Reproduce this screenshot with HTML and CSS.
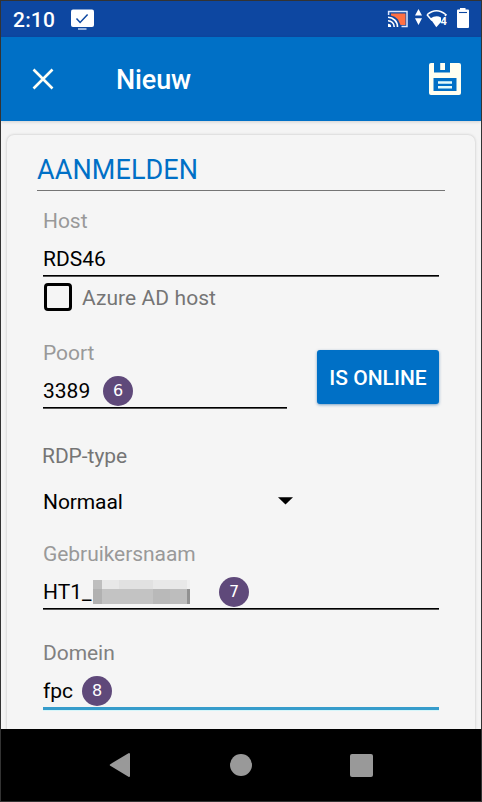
FILE: index.html
```html
<!DOCTYPE html>
<html lang="nl">
<head>
<meta charset="utf-8">
<title>Nieuw</title>
<link rel="stylesheet" href="styles.css">
</head>
<body>
<div class="phone">
  <div class="status">
    <span class="clock">2:10</span>
    <svg class="notif" width="24" height="22" viewBox="0 0 24 22"><rect x="1" y="1.500" width="23" height="17.500" rx="2" fill="#fff"/><path d="M6.500 10.500l3.600 4 7.500-8" fill="none" stroke="#0d47a1" stroke-width="1.500"/><path d="M8 21h8.500" stroke="#cfe0fa" stroke-width="1.400"/></svg>
    <svg class="tray" width="84" height="24" viewBox="386 6 84 24">
      <path d="M391 13.500H405.500V25H400.500L398 19.500Q395 16 391 15.500Z" fill="#ff7043"/>
      <path d="M388.600 15V11.600H407V26.400H401.500" fill="none" stroke="#dbe7ff" stroke-width="1.500"/>
      <path d="M388 17.300A9.500 9.500 0 0 1 397.500 27M388 20.700A6.200 6.200 0 0 1 394.200 27" fill="none" stroke="#fff" stroke-width="1.600"/><path d="M388 23.800A3.200 3.200 0 0 1 391.200 27H388Z" fill="#fff"/>
      <path d="M415 15.500L418.500 9L422 15.500ZM415 18.300H422L418.500 25Z" fill="#fff"/>
      <path d="M427 14.800Q436.500 6.800 446 14.800L445 16M427 14.800L432 20.500" fill="none" stroke="#fff" stroke-width="1.500"/>
      <path d="M430.300 18.500Q436 14.800 441 17.500V22L436.300 27.300Z" fill="#fff"/>
      <text x="440.500" y="25" class="wifi-num">4</text>
      <path d="M457 10.500Q457 9.500 458 9.500H460V8H465.500V9.500H468Q469 9.500 469 10.500V27Q469 28 468 28H458Q457 28 457 27Z" fill="#fff"/><path d="M459 12.500H467" stroke="#0d47a1" stroke-width="1.1"/>
    </svg>
  </div>
  <header class="appbar">
    <svg class="close" width="22" height="22" viewBox="0 0 22 22"><path d="M1.500 1.500L20.500 20.500M20.500 1.500L1.500 20.500" stroke="#fffff5" stroke-width="2.600"/></svg>
    <h1 class="title">Nieuw</h1>
    <svg class="save" width="32" height="32" viewBox="0 0 32 32"><path d="M2 0H5V9.500H21V0H30Q32 0 32 2V30Q32 32 30 32H2Q0 32 0 30V2Q0 0 2 0Z" fill="#fffff0"/><path d="M11.200 0H16V7H11.200Z" fill="#fffff0"/><path d="M4.500 15H27.500V28H4.500Z" fill="#0070c6"/><path d="M9 19.500H23M9 24.200H23" stroke="#e4fafa" stroke-width="2.400"/></svg>
  </header>
  <main class="content">
    <section class="card">
      <h2 class="heading">AANMELDEN</h2>
      <div class="form">
        <div class="field">
          <label class="label">Host</label>
          <div class="value"><span class="t-host">RDS46</span></div>
        </div>
        <div class="check"><span class="box"></span><span class="check-label">Azure AD host</span></div>
        <div class="port-row">
          <div class="field port">
            <label class="label">Poort</label>
            <div class="value"><span class="t-port">3389</span><span class="badge badge-port">6</span></div>
          </div>
          <button class="online">IS ONLINE</button>
        </div>
        <label class="label type-label">RDP-type</label>
        <div class="select"><span>Normaal</span><svg width="15" height="8" viewBox="0 0 15 8"><path d="M0 0.200H15L7.500 7.600Z"/></svg></div>
        <div class="field user">
          <label class="label">Gebruikersnaam</label>
          <div class="value"><span class="t-user">HT1_</span><svg class="mask" width="97" height="24" viewBox="0 0 97 24" shape-rendering="crispEdges"><path d="M0 0H9V9H0Z" fill="#bebebe"/><path d="M9 0H94V9H9Z" fill="#e8e8e8"/><path d="M26 0H60V9H26Z" fill="#e1e1e1"/><path d="M94 0H97V9H94Z" fill="#f0f0f0"/><path d="M0 9H9V24H0Z" fill="#b1b1b1"/><path d="M9 9H60V24H9Z" fill="#c3c3c3"/><path d="M60 9H77V24H60Z" fill="#b9b9b9"/><path d="M77 9H94V24H77Z" fill="#bdbdbd"/><path d="M94 9H97V24H94Z" fill="#929292"/></svg><span class="badge badge-user">7</span></div>
        </div>
        <div class="field domain">
          <label class="label">Domein</label>
          <div class="value"><span class="t-domain">fpc</span><span class="badge badge-domain">8</span></div>
        </div>
      </div>
    </section>
  </main>
  <nav class="nav">
    <svg width="22" height="26" viewBox="0 0 22 26"><path d="M20 2V24L1.800 13Z" fill="#999" stroke="#999" stroke-width="2" stroke-linejoin="round"/></svg>
    <span class="home"></span>
    <span class="recent"></span>
  </nav>
</div>
</body>
</html>
```

FILE: styles.css
```css
* { box-sizing: border-box; }
body { margin: 0; font-family: Roboto, sans-serif; font-size: 21px; line-height: 24px; color: #000; }
h1, h2 { margin: 0; }
svg { display: block; flex: none; }
.phone { width: 482px; height: 802px; border: 1px solid #333; display: flex; flex-direction: column; overflow: hidden; background: #f4f4f4; }
.status { height: 36px; flex: none; background: #0d47a1; display: flex; align-items: flex-start; padding: 7px 11px 0 12px; color: #fff; }
.clock { width: 57px; font-weight: 500; line-height: 24px; letter-spacing: 0.2px; }
.tray { margin: -2px 0 0 auto; }
.wifi-num { font: 700 11px Roboto, sans-serif; fill: #fff; }
.appbar { height: 84px; flex: none; background: #0070c6; display: flex; align-items: center; padding: 0 20px 0 31px; color: #fff; box-shadow: 0 1px 3px rgba(0, 0, 0, 0.15); }
.title { font-size: 27px; font-weight: 500; line-height: 32px; margin-left: 62px; padding-top: 2px; letter-spacing: -0.1px; }
.save { margin-left: auto; }
.content { flex: 1; min-height: 0; overflow: hidden; padding: 14px 6px 0; }
.card { height: 620px; border-radius: 7px; background: #f5f5f5; box-shadow: 0 0 3px rgba(0, 0, 0, 0.22); padding: 20px 30px 0; }
.heading { font-size: 27px; font-weight: 400; line-height: 30px; letter-spacing: 0.1px; padding-bottom: 5px; border-bottom: 1px solid #757575; color: #0070c6; }
.form { padding: 18px 6px 0; }
.label { display: block; color: #999; letter-spacing: -0.05px; }
.value { display: flex; align-items: center; height: 42px; padding: 13px 0 4px; border-bottom: 1px solid #000; box-shadow: 0 1px #555; margin: 1px 0; }
.badge { width: 30px; height: 30px; flex: none; border-radius: 50%; background: #5f497a; color: #fff; font: 16px/30px "DejaVu Sans", sans-serif; text-align: center; margin-top: -3px; margin-bottom: -3px; }
.check { display: flex; align-items: center; height: 28px; margin-top: 7px; padding-left: 1px; }
.box { width: 28px; height: 28px; border: 3px solid #000; border-radius: 4px; }
.check-label { margin-left: 10px; padding-top: 2px; color: #757575; letter-spacing: 0.08px; }
.port-row { display: flex; justify-content: space-between; margin-top: 30px; }
.port { width: 244px; }
.online { width: 122px; height: 54px; margin-top: 9px; padding: 2px 0 0; border: 0; border-radius: 3px; background: #0070c6; color: #fff; font: 500 21px/52px Roboto, sans-serif; box-shadow: 0 1px 3px rgba(0, 80, 150, 0.5); }
.type-label { margin: 35px 0 0 -1px; color: #757575; }
.select { display: flex; align-items: center; justify-content: space-between; width: 250px; height: 24px; margin-top: 22px; letter-spacing: -0.1px; }
.select svg { margin-bottom: 2px; }
.user { margin-top: 28px; }
.domain { margin-top: 32px; }
.domain .label { color: #808080; }
.domain .value { height: 44px; margin-bottom: 0; border-bottom: 3px solid #369ccb; box-shadow: 0 1px #d5f6fa; }
.t-port { width: 60px; }
.t-user { width: 50px; }
.badge-user { margin-left: 29px; }
.t-domain { width: 39px; }
.nav { height: 72px; flex: none; background: #000; display: flex; align-items: center; justify-content: space-between; padding: 0 108px; }
.home { width: 22px; height: 22px; border-radius: 50%; background: #999; }
.recent { width: 23px; height: 23px; border-radius: 2px; background: #999; }
```
